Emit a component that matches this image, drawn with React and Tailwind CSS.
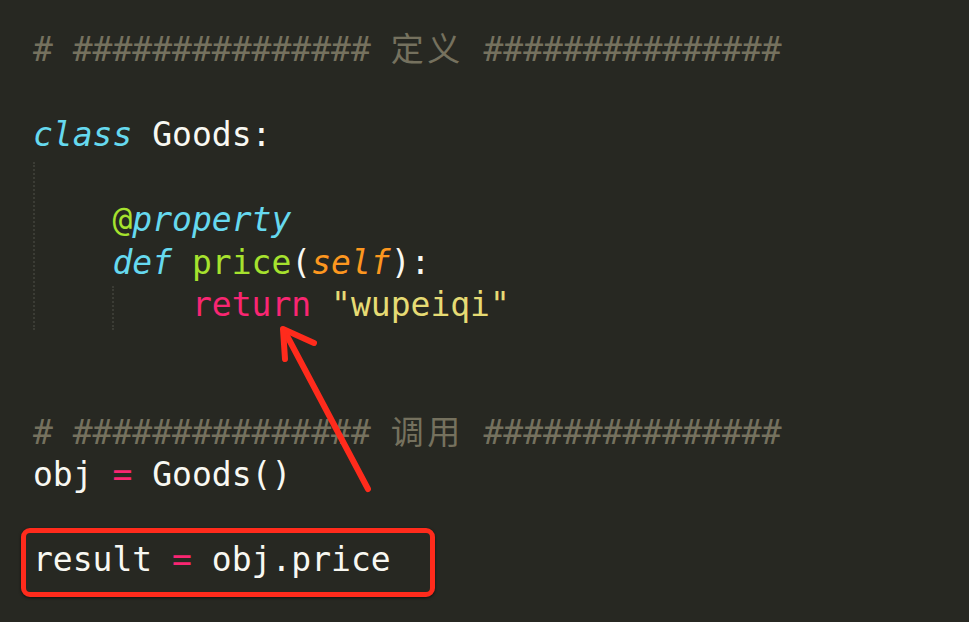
import React from "react";

const mono = { fontFamily: '"DejaVu Sans Mono", "Noto Sans CJK SC", monospace' };

function Comment({ label }) {
  return (
    <div className="h-[42.5px] text-[#75715e]">
      {"# ############### "}
      <span
        className="tracking-[3.5px] leading-none"
        style={{ fontFamily: '"Noto Sans CJK SC", sans-serif' }}
      >
        {label}
      </span>
      {" ###############"}
    </div>
  );
}

function Blank() {
  return <div>{"\u00a0"}</div>;
}

export default function App() {
  return (
    <div className="relative w-[969px] h-[622px] overflow-hidden bg-[#272822]">
      <div
        className="pl-[33px] pt-[29px] text-[33px] leading-[42.5px] whitespace-pre text-[#f8f8f2]"
        style={mono}
      >
        <Comment label="定义" />
        <Blank />
        <div>
          <span className="italic text-[#66d9ef]">class</span> Goods:
        </div>

        {/* class body, with indent guides */}
        <div className="relative">
          <div className="absolute left-0 top-[5px] bottom-[-3px] border-l-2 border-dotted border-[#3b3c35]" />
          <Blank />
          <div>
            {"    "}
            <span className="text-[#a6e22e]">@</span>
            <span className="italic text-[#66d9ef]">property</span>
          </div>
          <div>
            {"    "}
            <span className="italic text-[#66d9ef]">def</span>{" "}
            <span className="text-[#a6e22e]">price</span>(
            <span className="italic text-[#fd971f]">self</span>):
          </div>
          <div className="relative">
            <div className="absolute left-[79px] top-[2px] bottom-[-3px] border-l-2 border-dotted border-[#3b3c35]" />
            {"        "}
            <span className="text-[#f92672]">return</span>{" "}
            <span className="text-[#e6db74]">"wupeiqi"</span>
          </div>
        </div>

        <Blank />
        <Blank />
        <Comment label="调用" />
        <div>
          obj <span className="text-[#f92672]">=</span> Goods()
        </div>
        <Blank />
        <div className="relative">
          result <span className="text-[#f92672]">=</span> obj.price
          <div className="absolute left-[-12px] top-[-11px] w-[414px] h-[69px] rounded-[9px] border-[5px] border-[#ff2b1c] shadow-[0_1px_3px_rgba(0,0,0,0.6)]" />
        </div>
      </div>

      {/* annotation arrow */}
      <svg className="absolute left-0 top-0" width="969" height="622" viewBox="0 0 969 622">
        <g stroke="#ff2b1c" strokeWidth="6" strokeLinecap="round" strokeLinejoin="round" fill="none">
          <line x1="368" y1="489" x2="285" y2="332" />
          <polyline points="285,359 283,329 314,343" />
        </g>
      </svg>
    </div>
  );
}
